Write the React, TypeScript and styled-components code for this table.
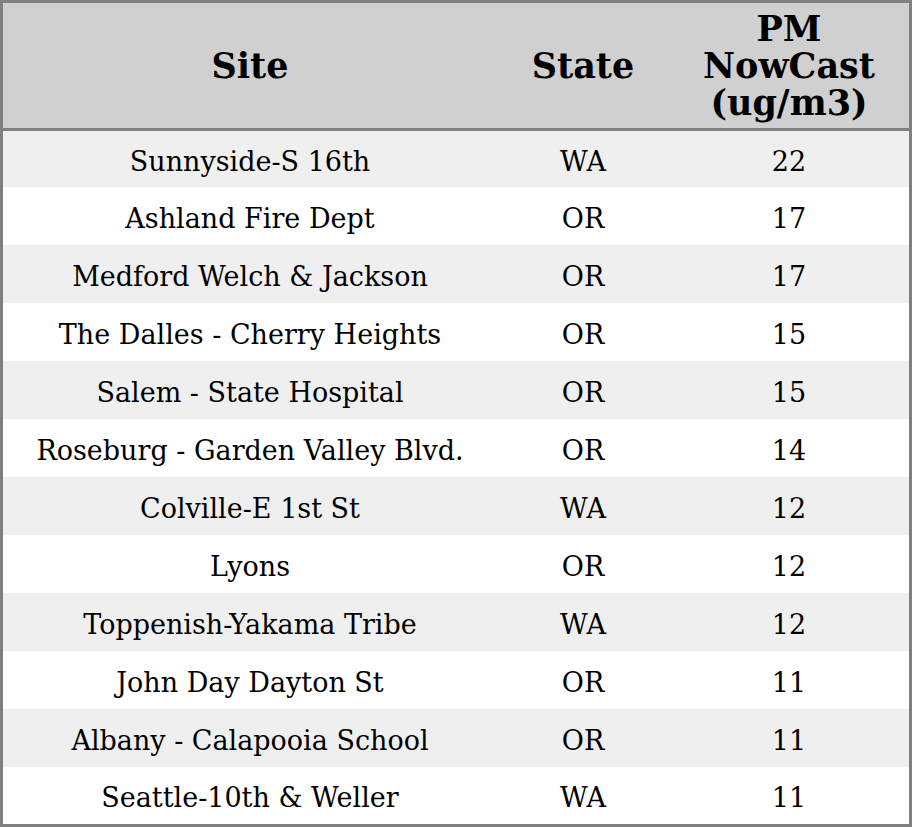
import React from "react";
import styled, { createGlobalStyle } from "styled-components";

const Global = createGlobalStyle`
  html, body { margin: 0; padding: 0; background: #ffffff; }
  body { font-family: "DejaVu Serif", "Liberation Serif", serif; }
`;

const Table = styled.table`
  width: 912px;
  border-collapse: separate;
  border-spacing: 0;
  border: 3px solid #808080;
  table-layout: fixed;
  font-family: "DejaVu Serif", "Liberation Serif", serif;
  color: #000;
`;

const HeadCell = styled.th`
  background: #d0d0d0;
  height: 125px;
  padding: 0;
  border-bottom: 3px solid #808080;
  font-size: 35px;
  font-weight: bold;
  line-height: 37px;
  text-align: center;
  vertical-align: middle;
`;

const Row = styled.tr<{ $striped: boolean; $h: number }>`
  background: ${(p) => (p.$striped ? "#efefef" : "#ffffff")};
  height: ${(p) => p.$h}px;
`;

const Cell = styled.td`
  padding: 5px 0 0 0;
  font-size: 27px;
  line-height: 30px;
  text-align: center;
  vertical-align: middle;
  white-space: nowrap;
`;

const rows: [string, string, number][] = [
  ["Sunnyside-S 16th", "WA", 22],
  ["Ashland Fire Dept", "OR", 17],
  ["Medford Welch & Jackson", "OR", 17],
  ["The Dalles - Cherry Heights", "OR", 15],
  ["Salem - State Hospital", "OR", 15],
  ["Roseburg - Garden Valley Blvd.", "OR", 14],
  ["Colville-E 1st St", "WA", 12],
  ["Lyons", "OR", 12],
  ["Toppenish-Yakama Tribe", "WA", 12],
  ["John Day Dayton St", "OR", 11],
  ["Albany - Calapooia School", "OR", 11],
  ["Seattle-10th & Weller", "WA", 11],
];

export default function App() {
  return (
    <>
      <Global />
      <Table>
        <colgroup>
          <col style={{ width: 494 }} />
          <col style={{ width: 172 }} />
          <col style={{ width: 240 }} />
        </colgroup>
        <thead>
          <tr>
            <HeadCell>Site</HeadCell>
            <HeadCell>State</HeadCell>
            <HeadCell>
              PM
              <br />
              NowCast
              <br />
              (ug/m3)
            </HeadCell>
          </tr>
        </thead>
        <tbody>
          {rows.map(([site, state, val], i) => (
            <Row
              key={site}
              $striped={i % 2 === 0}
              $h={i === 0 ? 56 : i === rows.length - 1 ? 57 : 58}
            >
              <Cell>{site}</Cell>
              <Cell>{state}</Cell>
              <Cell>{val}</Cell>
            </Row>
          ))}
        </tbody>
      </Table>
    </>
  );
}
